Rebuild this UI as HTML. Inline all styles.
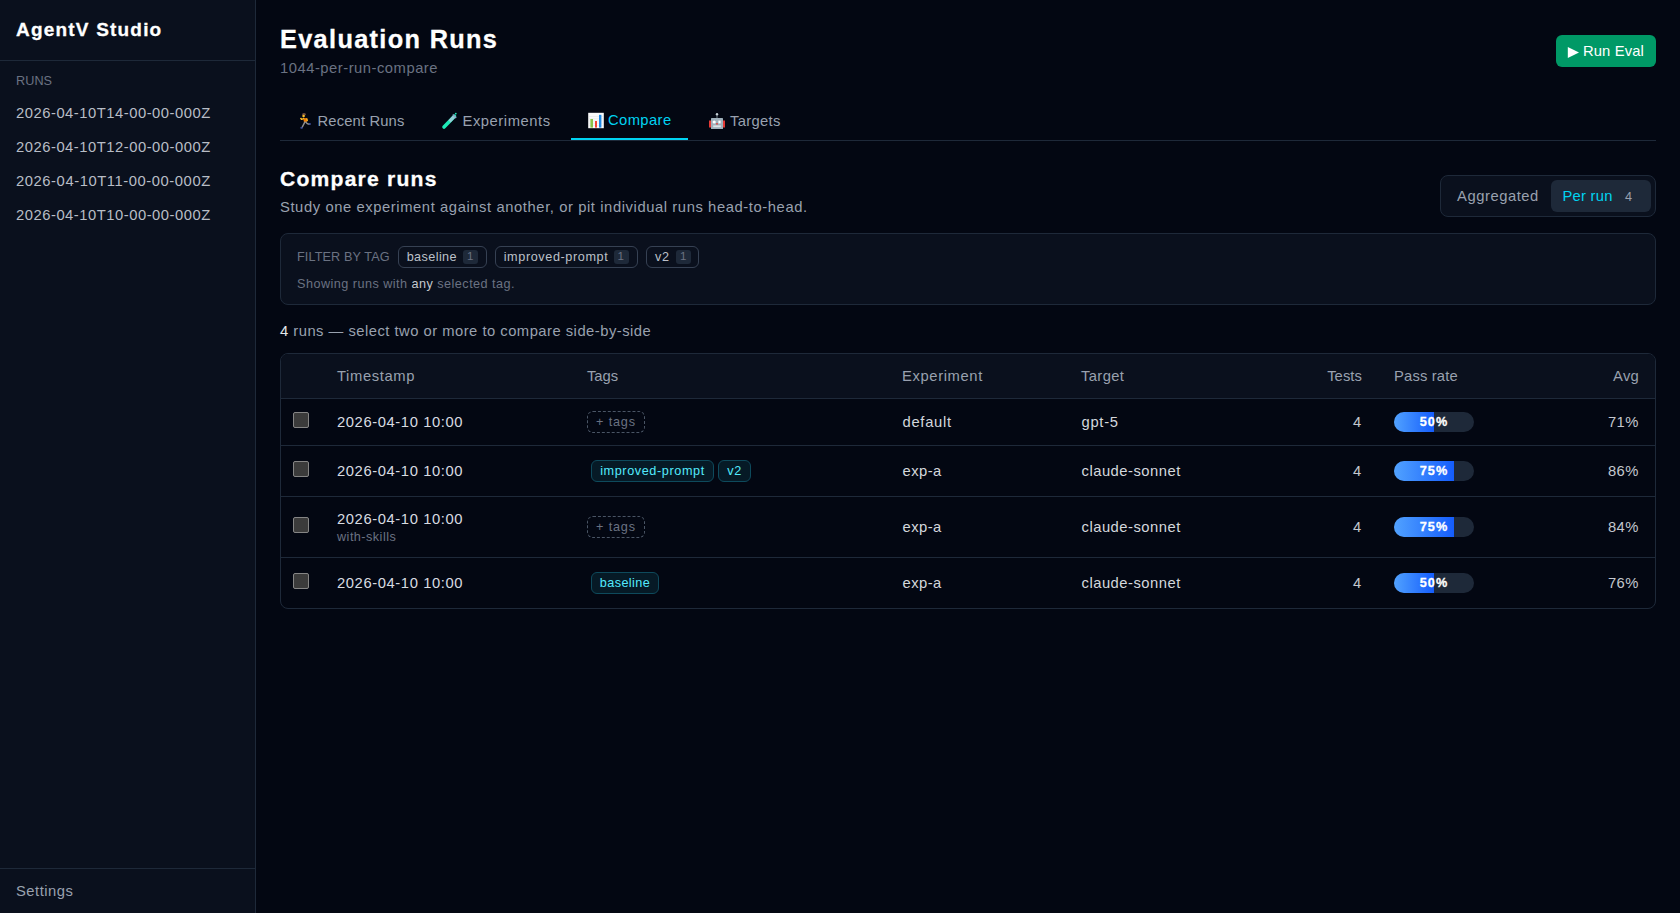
<!DOCTYPE html>
<html><head><meta charset="utf-8">
<style>
*{box-sizing:border-box;margin:0;padding:0}
html,body{width:1680px;height:913px;overflow:hidden;background:#030712;font-family:"Liberation Sans", sans-serif}
.t{position:absolute;white-space:nowrap;line-height:20px}
.pb{display:inline-block;width:0;height:0}
.a{position:absolute}
</style></head><body>
<div class="a" style="left:0;top:0;width:256px;height:913px;background:#0a101d;border-right:1px solid #1e2939"></div>
<div class="a" style="left:0;top:60px;width:255px;height:1px;background:#1e2939"></div>
<div class="a" style="left:0;top:868px;width:255px;height:1px;background:#1e2939"></div>
<!-- run eval button -->
<div class="a" style="left:1556px;top:35px;width:100px;height:32px;background:#009966;border-radius:6px"></div>
<svg class="a" style="left:1566px;top:45px" width="16" height="16" viewBox="0 0 16 16"><polygon points="1.8,2 13,7.5 1.8,13" fill="#fff"/></svg>
<!-- tabs -->
<div class="a" style="left:280px;top:140px;width:1376px;height:1px;background:#1e2939"></div>
<div class="a" style="left:571px;top:138px;width:117px;height:2px;background:#00d3f2"></div>
<!-- runner icon -->
<svg class="a" style="left:298px;top:111px" width="16" height="20" viewBox="0 0 16 20">
  <ellipse cx="6" cy="3.2" rx="1.8" ry="1.3" fill="#6d4c41"/>
  <ellipse cx="5.6" cy="5.1" rx="1.3" ry="1.4" fill="#fbc02d"/>
  <path d="M5.2 7 L9.2 7.2 L8.8 11 L6 11.2Z" fill="#f57c00"/>
  <path d="M5.6 7.6 L3.6 8.4" stroke="#fbc02d" stroke-width="1.3" fill="none" stroke-linecap="round"/>
  <circle cx="3" cy="7.6" r="0.9" fill="#fbc02d"/>
  <path d="M8.9 7.8 L9.3 9.6" stroke="#fbc02d" stroke-width="1.3" fill="none" stroke-linecap="round"/>
  <path d="M6.8 11.2 Q5.6 13.5 4.3 16" stroke="#8e8e8e" stroke-width="1.5" fill="none" stroke-linecap="round"/>
  <path d="M7.8 11.2 Q9 13.2 11.2 13.2" stroke="#8e8e8e" stroke-width="1.5" fill="none" stroke-linecap="round"/>
  <ellipse cx="3.6" cy="16.8" rx="1.4" ry="0.9" fill="#3f51a0"/>
  <ellipse cx="11.9" cy="13" rx="1" ry="1" fill="#3f51a0"/>
</svg>
<!-- test tube icon -->
<svg class="a" style="left:440px;top:112px" width="20" height="18" viewBox="0 0 20 18">
  <path d="M4 15 L14.5 4.2" stroke="#1de9b6" stroke-width="3.6" stroke-linecap="round"/>
  <path d="M9.5 9.3 L14.5 4.2" stroke="#b0c8e0" stroke-width="3.2" stroke-linecap="butt" opacity="0.8"/>
  <path d="M12.8 2.6 L16.2 6" stroke="#90a4c8" stroke-width="1.4"/>
  <circle cx="15.8" cy="1.6" r="0.9" fill="#1de9b6"/>
</svg>
<!-- chart icon -->
<svg class="a" style="left:588px;top:112px" width="16" height="17" viewBox="0 0 16 17">
  <rect x="0.2" y="0.8" width="15.6" height="15.4" fill="#fafafa"/>
  <path d="M1 4.5H15M1 6.8H15M1 9H15M1 11.2H15M1 13.4H15" stroke="#e3e6ea" stroke-width="0.6"/>
  <rect x="2.4" y="7" width="2.6" height="8.6" fill="#8bc34a"/>
  <rect x="7" y="9" width="2" height="6.6" fill="#f44336"/>
  <rect x="11" y="2.8" width="2.4" height="12.8" fill="#1e88e5"/>
</svg>
<!-- robot icon -->
<svg class="a" style="left:708px;top:112px" width="18" height="18" viewBox="0 0 18 18">
  <rect x="1" y="8.5" width="2" height="7" fill="#e53935"/>
  <rect x="15" y="8.5" width="2" height="7" fill="#e53935"/>
  <rect x="3" y="6" width="12" height="11" rx="0.6" fill="#9fb0bb"/>
  <path d="M9 6 V2.4" stroke="#8a9aa5" stroke-width="0.8"/>
  <circle cx="9" cy="2.2" r="1.2" fill="#c6d0d6"/>
  <circle cx="6.2" cy="10" r="1.6" fill="#fff"/>
  <rect x="10.4" y="8.6" width="2.2" height="2.8" fill="#fff"/>
  <circle cx="9" cy="11.8" r="0.9" fill="#e53935"/>
  <rect x="5.2" y="13.4" width="7.6" height="1.8" fill="#dfe4e8"/>
</svg>
<!-- toggle -->
<div class="a" style="left:1440px;top:175px;width:216px;height:42px;background:#0a101d;border:1px solid #1e2939;border-radius:8px"></div>
<div class="a" style="left:1551px;top:180px;width:100px;height:32px;background:#1e2939;border-radius:6px"></div>
<!-- filter box -->
<div class="a" style="left:280px;top:233px;width:1376px;height:72px;background:#0a101d;border:1px solid #1e2939;border-radius:8px"></div>
<div class="a" style="left:398px;top:246px;width:89px;height:22px;border:1px solid #364153;border-radius:6px"></div>
<div class="a" style="left:463px;top:250px;width:15px;height:14px;background:#1e2939;border-radius:3px"></div>
<div class="a" style="left:495px;top:246px;width:143px;height:22px;border:1px solid #364153;border-radius:6px"></div>
<div class="a" style="left:614px;top:250px;width:15px;height:14px;background:#1e2939;border-radius:3px"></div>
<div class="a" style="left:646px;top:246px;width:53px;height:22px;border:1px solid #364153;border-radius:6px"></div>
<div class="a" style="left:676px;top:250px;width:15px;height:14px;background:#1e2939;border-radius:3px"></div>
<!-- table -->
<div class="a" style="left:280px;top:353px;width:1376px;height:256px;border:1px solid #1e2939;border-radius:8px;overflow:hidden">
  <div class="a" style="left:0;top:0;width:1374px;height:45px;background:#0a101d;border-bottom:1px solid #1e2939"></div>
  <div class="a" style="left:0;top:91px;width:1374px;height:1px;background:#1e2939"></div>
  <div class="a" style="left:0;top:142px;width:1374px;height:1px;background:#1e2939"></div>
  <div class="a" style="left:0;top:203px;width:1374px;height:1px;background:#1e2939"></div>
</div>
<!-- checkboxes -->
<div class="a" style="left:293px;top:412px;width:16px;height:16px;background:#3b3b3b;border:1px solid #858585;border-radius:2px"></div>
<div class="a" style="left:293px;top:461px;width:16px;height:16px;background:#3b3b3b;border:1px solid #858585;border-radius:2px"></div>
<div class="a" style="left:293px;top:517px;width:16px;height:16px;background:#3b3b3b;border:1px solid #858585;border-radius:2px"></div>
<div class="a" style="left:293px;top:573px;width:16px;height:16px;background:#3b3b3b;border:1px solid #858585;border-radius:2px"></div>
<!-- tags -->
<div class="a" style="left:587px;top:411px;width:58px;height:22px;border:1px dashed #4a5565;border-radius:6px"></div>
<div class="a" style="left:591px;top:460px;width:123px;height:22px;background:#061a26;border:1px solid #0e4a5c;border-radius:6px"></div>
<div class="a" style="left:718px;top:460px;width:33px;height:22px;background:#061a26;border:1px solid #0e4a5c;border-radius:6px"></div>
<div class="a" style="left:587px;top:516px;width:58px;height:22px;border:1px dashed #4a5565;border-radius:6px"></div>
<div class="a" style="left:591px;top:572px;width:68px;height:22px;background:#061a26;border:1px solid #0e4a5c;border-radius:6px"></div>
<!-- bars -->
<div class="a" style="left:1394px;top:412px;width:80px;height:20px;background:#1e2939;border-radius:10px;overflow:hidden"><div class="a" style="left:0;top:0;width:40px;height:20px;background:linear-gradient(90deg,#51a2ff,#155dfc)"></div></div>
<div class="a" style="left:1394px;top:461px;width:80px;height:20px;background:#1e2939;border-radius:10px;overflow:hidden"><div class="a" style="left:0;top:0;width:60px;height:20px;background:linear-gradient(90deg,#51a2ff,#155dfc)"></div></div>
<div class="a" style="left:1394px;top:517px;width:80px;height:20px;background:#1e2939;border-radius:10px;overflow:hidden"><div class="a" style="left:0;top:0;width:60px;height:20px;background:linear-gradient(90deg,#51a2ff,#155dfc)"></div></div>
<div class="a" style="left:1394px;top:573px;width:80px;height:20px;background:#1e2939;border-radius:10px;overflow:hidden"><div class="a" style="left:0;top:0;width:40px;height:20px;background:linear-gradient(90deg,#51a2ff,#155dfc)"></div></div>

<div class="t" style="left:16.00px;top:20.00px;font-size:18.99px;font-weight:bold;letter-spacing:1.203px;color:#ffffff;-webkit-text-stroke:0.3px currentColor">AgentV Studio</div>
<div class="t" style="left:16.00px;top:71.00px;font-size:12.66px;letter-spacing:0.061px;color:#6a7282">RUNS</div>
<div class="t" style="left:16.00px;top:103.00px;font-size:14.77px;letter-spacing:0.523px;color:#b8bdc6">2026-04-10T14-00-00-000Z</div>
<div class="t" style="left:16.00px;top:137.00px;font-size:14.77px;letter-spacing:0.523px;color:#b8bdc6">2026-04-10T12-00-00-000Z</div>
<div class="t" style="left:16.00px;top:171.00px;font-size:14.77px;letter-spacing:0.568px;color:#b8bdc6">2026-04-10T11-00-00-000Z</div>
<div class="t" style="left:16.00px;top:205.00px;font-size:14.77px;letter-spacing:0.523px;color:#b8bdc6">2026-04-10T10-00-00-000Z</div>
<div class="t" style="left:16.00px;top:881.00px;font-size:14.77px;letter-spacing:0.507px;color:#99a1af">Settings</div>
<div class="t" style="left:280.00px;top:29.00px;font-size:25.32px;font-weight:bold;letter-spacing:1.33px;color:#ffffff;-webkit-text-stroke:0.3px currentColor">Evaluation Runs</div>
<div class="t" style="left:280.00px;top:58.00px;font-size:14.77px;letter-spacing:0.515px;color:#6a7282">1044-per-run-compare</div>
<div class="t" style="left:1583.00px;top:41.00px;font-size:14.77px;letter-spacing:0.12px;color:#ffffff">Run Eval</div>
<div class="t" style="left:317.50px;top:111.00px;font-size:14.77px;letter-spacing:0.145px;color:#99a1af">Recent Runs</div>
<div class="t" style="left:462.50px;top:111.00px;font-size:14.77px;letter-spacing:0.554px;color:#99a1af">Experiments</div>
<div class="t" style="left:608.00px;top:110.00px;font-size:14.77px;letter-spacing:0.394px;color:#00d3f2">Compare</div>
<div class="t" style="left:730.00px;top:111.00px;font-size:14.77px;letter-spacing:0.31px;color:#99a1af">Targets</div>
<div class="t" style="left:280.00px;top:169.00px;font-size:21.1px;font-weight:bold;letter-spacing:1.222px;color:#ffffff;-webkit-text-stroke:0.3px currentColor">Compare runs</div>
<div class="t" style="left:280.00px;top:197.00px;font-size:14.77px;letter-spacing:0.586px;color:#99a1af">Study one experiment against another, or pit individual runs head-to-head.</div>
<div class="t" style="left:1457.00px;top:186.00px;font-size:14.77px;letter-spacing:0.549px;color:#99a1af">Aggregated</div>
<div class="t" style="left:1562.50px;top:186.00px;font-size:14.77px;letter-spacing:0.261px;color:#00d3f2">Per run</div>
<div class="t" style="left:1625.00px;top:187.00px;font-size:12.66px;letter-spacing:0.594px;color:#99a1af">4</div>
<div class="t" style="left:297.00px;top:247.00px;font-size:12.66px;letter-spacing:0.118px;color:#6a7282">FILTER BY TAG</div>
<div class="t" style="left:406.70px;top:247.00px;font-size:12.66px;letter-spacing:0.388px;color:#bcc1c9">baseline</div>
<div class="t" style="left:467.00px;top:246.00px;font-size:11.6px;letter-spacing:0.547px;color:#6a7282">1</div>
<div class="t" style="left:503.70px;top:247.00px;font-size:12.66px;letter-spacing:0.602px;color:#bcc1c9">improved-prompt</div>
<div class="t" style="left:617.50px;top:246.00px;font-size:11.6px;letter-spacing:0.547px;color:#6a7282">1</div>
<div class="t" style="left:655.00px;top:247.00px;font-size:12.66px;letter-spacing:0.683px;color:#bcc1c9">v2</div>
<div class="t" style="left:680.00px;top:246.00px;font-size:11.6px;letter-spacing:0.547px;color:#6a7282">1</div>
<div class="t" style="left:297.00px;top:274.00px;font-size:12.66px;letter-spacing:0.46px;color:#99a1af"><span style="color:#6a7282">Showing runs with </span><span style="color:#c4c8cf">any</span><span style="color:#6a7282"> selected tag.</span></div>
<div class="t" style="left:280.00px;top:321.00px;font-size:14.77px;letter-spacing:0.488px;color:#99a1af"><span style="color:#e5e7eb">4</span><span style="color:#99a1af"> runs — select two or more to compare side-by-side</span></div>
<div class="t" style="left:337.00px;top:366.00px;font-size:14.77px;letter-spacing:0.628px;color:#99a1af">Timestamp</div>
<div class="t" style="left:587.00px;top:366.00px;font-size:14.77px;letter-spacing:-0.051px;color:#99a1af">Tags</div>
<div class="t" style="left:902.00px;top:366.00px;font-size:14.77px;letter-spacing:0.619px;color:#99a1af">Experiment</div>
<div class="t" style="left:1081.00px;top:366.00px;font-size:14.77px;letter-spacing:0.377px;color:#99a1af">Target</div>
<div class="t" style="left:1327.14px;top:366.00px;font-size:14.77px;letter-spacing:0.078px;color:#99a1af">Tests</div>
<div class="t" style="left:1394.00px;top:366.00px;font-size:14.77px;letter-spacing:0.164px;color:#99a1af">Pass rate</div>
<div class="t" style="left:1613.07px;top:366.00px;font-size:14.77px;letter-spacing:0.248px;color:#99a1af">Avg</div>
<div class="t" style="left:337.00px;top:412.00px;font-size:14.77px;letter-spacing:0.596px;color:#d8dbe1">2026-04-10 10:00</div>
<div class="t" style="left:902.50px;top:412.00px;font-size:14.77px;letter-spacing:0.702px;color:#d4d7dd">default</div>
<div class="t" style="left:1081.50px;top:412.00px;font-size:14.77px;letter-spacing:0.711px;color:#d4d7dd">gpt-5</div>
<div class="t" style="left:1353.09px;top:412.00px;font-size:14.77px;letter-spacing:0.693px;color:#c4c8cf">4</div>
<div class="t" style="left:1607.88px;top:412.00px;font-size:14.77px;letter-spacing:0.519px;color:#c4c8cf">71%</div>
<div class="t" style="left:1419.64px;top:412.00px;font-size:12.66px;font-weight:bold;letter-spacing:1.128px;color:#ffffff;-webkit-text-stroke:0.3px currentColor">50%</div>
<div class="t" style="left:596.10px;top:412.00px;font-size:12.66px;letter-spacing:0.826px;color:#6a7282">+ tags</div>
<div class="t" style="left:337.00px;top:461.00px;font-size:14.77px;letter-spacing:0.596px;color:#d8dbe1">2026-04-10 10:00</div>
<div class="t" style="left:902.50px;top:461.00px;font-size:14.77px;letter-spacing:0.444px;color:#d4d7dd">exp-a</div>
<div class="t" style="left:1081.50px;top:461.00px;font-size:14.77px;letter-spacing:0.501px;color:#d4d7dd">claude-sonnet</div>
<div class="t" style="left:1353.09px;top:461.00px;font-size:14.77px;letter-spacing:0.693px;color:#c4c8cf">4</div>
<div class="t" style="left:1607.88px;top:461.00px;font-size:14.77px;letter-spacing:0.519px;color:#c4c8cf">86%</div>
<div class="t" style="left:1419.64px;top:461.00px;font-size:12.66px;font-weight:bold;letter-spacing:1.128px;color:#ffffff;-webkit-text-stroke:0.3px currentColor">75%</div>
<div class="t" style="left:600.14px;top:461.00px;font-size:12.66px;letter-spacing:0.602px;color:#53eafd">improved-prompt</div>
<div class="t" style="left:727.13px;top:461.00px;font-size:12.66px;letter-spacing:0.683px;color:#53eafd">v2</div>
<div class="t" style="left:337.00px;top:509.00px;font-size:14.77px;letter-spacing:0.596px;color:#d8dbe1">2026-04-10 10:00</div>
<div class="t" style="left:337.00px;top:527.00px;font-size:12.66px;letter-spacing:0.462px;color:#6a7282">with-skills</div>
<div class="t" style="left:902.50px;top:517.00px;font-size:14.77px;letter-spacing:0.444px;color:#d4d7dd">exp-a</div>
<div class="t" style="left:1081.50px;top:517.00px;font-size:14.77px;letter-spacing:0.501px;color:#d4d7dd">claude-sonnet</div>
<div class="t" style="left:1353.09px;top:517.00px;font-size:14.77px;letter-spacing:0.693px;color:#c4c8cf">4</div>
<div class="t" style="left:1607.88px;top:517.00px;font-size:14.77px;letter-spacing:0.519px;color:#c4c8cf">84%</div>
<div class="t" style="left:1419.64px;top:517.00px;font-size:12.66px;font-weight:bold;letter-spacing:1.128px;color:#ffffff;-webkit-text-stroke:0.3px currentColor">75%</div>
<div class="t" style="left:596.10px;top:517.00px;font-size:12.66px;letter-spacing:0.826px;color:#6a7282">+ tags</div>
<div class="t" style="left:337.00px;top:573.00px;font-size:14.77px;letter-spacing:0.596px;color:#d8dbe1">2026-04-10 10:00</div>
<div class="t" style="left:902.50px;top:573.00px;font-size:14.77px;letter-spacing:0.444px;color:#d4d7dd">exp-a</div>
<div class="t" style="left:1081.50px;top:573.00px;font-size:14.77px;letter-spacing:0.501px;color:#d4d7dd">claude-sonnet</div>
<div class="t" style="left:1353.09px;top:573.00px;font-size:14.77px;letter-spacing:0.693px;color:#c4c8cf">4</div>
<div class="t" style="left:1607.88px;top:573.00px;font-size:14.77px;letter-spacing:0.519px;color:#c4c8cf">76%</div>
<div class="t" style="left:1419.64px;top:573.00px;font-size:12.66px;font-weight:bold;letter-spacing:1.128px;color:#ffffff;-webkit-text-stroke:0.3px currentColor">50%</div>
<div class="t" style="left:599.87px;top:573.00px;font-size:12.66px;letter-spacing:0.388px;color:#53eafd">baseline</div>
</body></html>
